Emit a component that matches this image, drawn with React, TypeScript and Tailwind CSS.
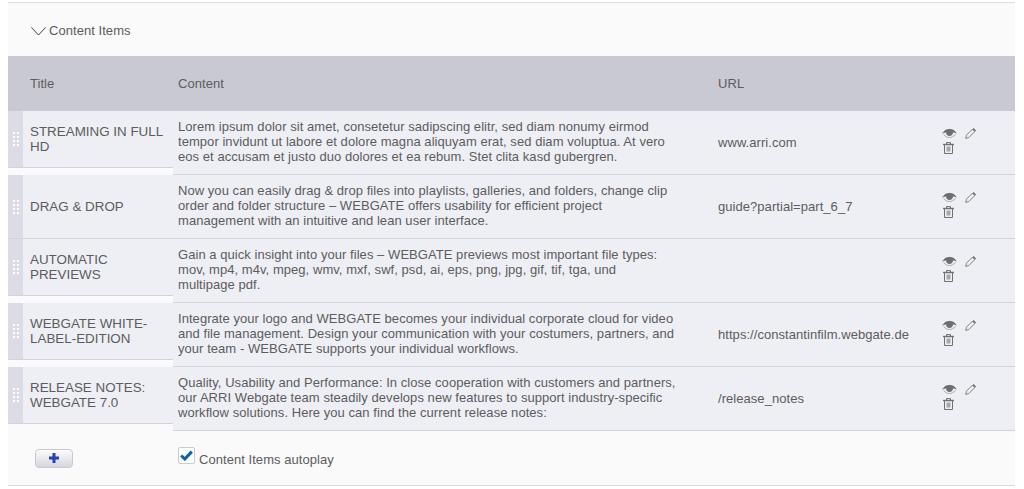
const rows = [
  {
    title: "STREAMING IN FULL HD",
    lines: [
      "Lorem ipsum dolor sit amet, consetetur sadipscing elitr, sed diam nonumy eirmod",
      "tempor invidunt ut labore et dolore magna aliquyam erat, sed diam voluptua. At vero",
      "eos et accusam et justo duo dolores et ea rebum. Stet clita kasd gubergren.",
    ],
    url: "www.arri.com",
    short: true,
  },
  {
    title: "DRAG & DROP",
    lines: [
      "Now you can easily drag & drop files into playlists, galleries, and folders, change clip",
      "order and folder structure – WEBGATE offers usability for efficient project",
      "management with an intuitive and lean user interface.",
    ],
    url: "guide?partial=part_6_7",
    short: false,
  },
  {
    title: "AUTOMATIC PREVIEWS",
    lines: [
      "Gain a quick insight into your files – WEBGATE previews most important file types:",
      "mov, mp4, m4v, mpeg, wmv, mxf, swf, psd, ai, eps, png, jpg, gif, tif, tga, und",
      "multipage pdf.",
    ],
    url: "",
    short: true,
  },
  {
    title: "WEBGATE WHITE-LABEL-EDITION",
    lines: [
      "Integrate your logo and WEBGATE becomes your individual corporate cloud for video",
      "and file management. Design your communication with your costumers, partners, and",
      "your team - WEBGATE supports your individual workflows.",
    ],
    url: "https://constantinfilm.webgate.de",
    short: true,
  },
  {
    title: "RELEASE NOTES: WEBGATE 7.0",
    lines: [
      "Quality, Usability and Performance: In close cooperation with customers and partners,",
      "our ARRI Webgate team steadily develops new features to support industry-specific",
      "workflow solutions. Here you can find the current release notes:",
    ],
    url: "/release_notes",
    short: true,
  },
];

function Handle() {
  return (
    <div className="w-[15px] shrink-0 bg-[#dcdce6] flex items-center justify-center">
      <div className="grid grid-cols-2 gap-[2px]">
        {[0, 1, 2, 3, 4, 5, 6, 7].map((i) => (
          <span key={i} className="w-[2px] h-[2px] bg-white" />
        ))}
      </div>
    </div>
  );
}

function EyeIcon() {
  return (
    <svg width="15" height="9" viewBox="0 0 15 9" className="block">
      <path d="M0 4.5C3 .5 5 0 7.5 0S12 .5 15 4.5C13 3.8 11.5 3.6 11 3.6 10.8 6 9.4 7 7.5 7S4.2 6 4 3.6C3.5 3.6 2 3.8 0 4.5Z" fill="#6e6e6e" />
      <path d="M1.5 5.5C3.5 7.6 5.5 8.5 7.5 8.5s4-.9 6-3" fill="none" stroke="#b0b0b0" strokeWidth="1" />
    </svg>
  );
}

function PencilIcon() {
  return (
    <svg width="11" height="11" viewBox="0 0 11 11" className="block">
      <path d="M.7 10.3 1.4 7.2 7.2 1.4 9.6 3.8 3.8 9.6Z" fill="none" stroke="#808080" strokeWidth="1" />
      <path d="M7.6 1 8.6 0 11 2.4 10 3.4Z" fill="#666" />
    </svg>
  );
}

function TrashIcon() {
  return (
    <svg width="11" height="12" viewBox="0 0 11 12" className="block">
      <path d="M0 2.5H11" stroke="#707070" strokeWidth="1.4" />
      <path d="M3.5 2V.6H7.5V2" fill="none" stroke="#707070" strokeWidth="1" />
      <path d="M1.5 3V11.5H9.5V3" fill="none" stroke="#707070" strokeWidth="1" />
      <path d="M3.5 4.5V9.5H7.5V4.5Z" fill="#a8a8a8" />
    </svg>
  );
}

export default function App() {
  return (
    <div className="bg-white h-[489px] pt-[2px] pl-2 pr-[9px] text-[13px] leading-[15px] tracking-[0.05px] text-[#5c5c5c] font-['Liberation_Sans',Arial,sans-serif] overflow-hidden">
      <div className="bg-[#fafafa] border-t border-[#dcdce6] border-b border-b-[#d8d8de]">
        <div className="h-[53px] flex items-center pl-[23px] pt-[2px] gap-[3px]">
          <svg width="15" height="9" viewBox="0 0 15 9" className="mt-[1px]">
            <path d="M.4.4 7.5 8 14.6.4" fill="none" stroke="#444" strokeWidth="1" />
          </svg>
          <span>Content Items</span>
        </div>

        <div className="h-[55px] bg-[#c9c9d3] flex items-center">
          <div className="w-[170px] pl-[22px]">Title</div>
          <div className="w-[540px]">Content</div>
          <div>URL</div>
        </div>

        {rows.map((row) => (
          <div key={row.title} className="h-[64px] flex">
            <div className={row.short ? "w-[165px] h-[57px] flex bg-[#eeeff4] border-b border-[#d2d2d8]" : "w-[165px] flex bg-[#eeeff4] border-b border-[#d2d2d8]"}>
              <Handle />
              <div className="flex-1 flex items-center pl-[7px] text-[13.4px] tracking-normal">{row.title}</div>
            </div>
            <div className="flex-1 flex bg-[#eeeff4] border-b border-[#d2d2d8]">
              <div className="w-[545px] pl-[5px] pb-[2px] flex flex-col justify-center">
                {row.lines.map((line) => (
                  <div key={line} className="whitespace-nowrap">{line}</div>
                ))}
              </div>
              <div className="w-[224px] flex items-center">{row.url}</div>
              <div className="pt-[17px]">
                <div className="flex gap-[8px] items-end">
                  <EyeIcon />
                  <div className="-mb-[1px]">
                    <PencilIcon />
                  </div>
                </div>
                <div className="mt-[4px] ml-[1px]">
                  <TrashIcon />
                </div>
              </div>
            </div>
          </div>
        ))}

        <div className="h-[54px] flex items-center">
          <div className="w-[170px] pl-[27px]">
            <button className="w-[38px] h-[19px] rounded-[4px] border border-[#c8c8d0] bg-gradient-to-b from-[#fcfcfc] to-[#d6d6e0] flex items-center justify-center">
              <svg width="10" height="10" viewBox="0 0 10 10">
                <path d="M5 0V10M0 5H10" stroke="#2a41ad" strokeWidth="3" />
              </svg>
            </button>
          </div>
          <div className="flex items-center gap-[4px]">
            <span className="w-[17px] h-[17px] rounded-[2px] border border-[#ccc] bg-white flex items-center justify-center -mt-[5px]">
              <svg width="13" height="11" viewBox="0 0 13 11">
                <path d="M1.2 5.5 4.8 9 11.8 1.6" fill="none" stroke="#0b62a8" strokeWidth="3" />
              </svg>
            </span>
            <span className="mt-[2px]">Content Items autoplay</span>
          </div>
        </div>
      </div>
    </div>
  );
}
